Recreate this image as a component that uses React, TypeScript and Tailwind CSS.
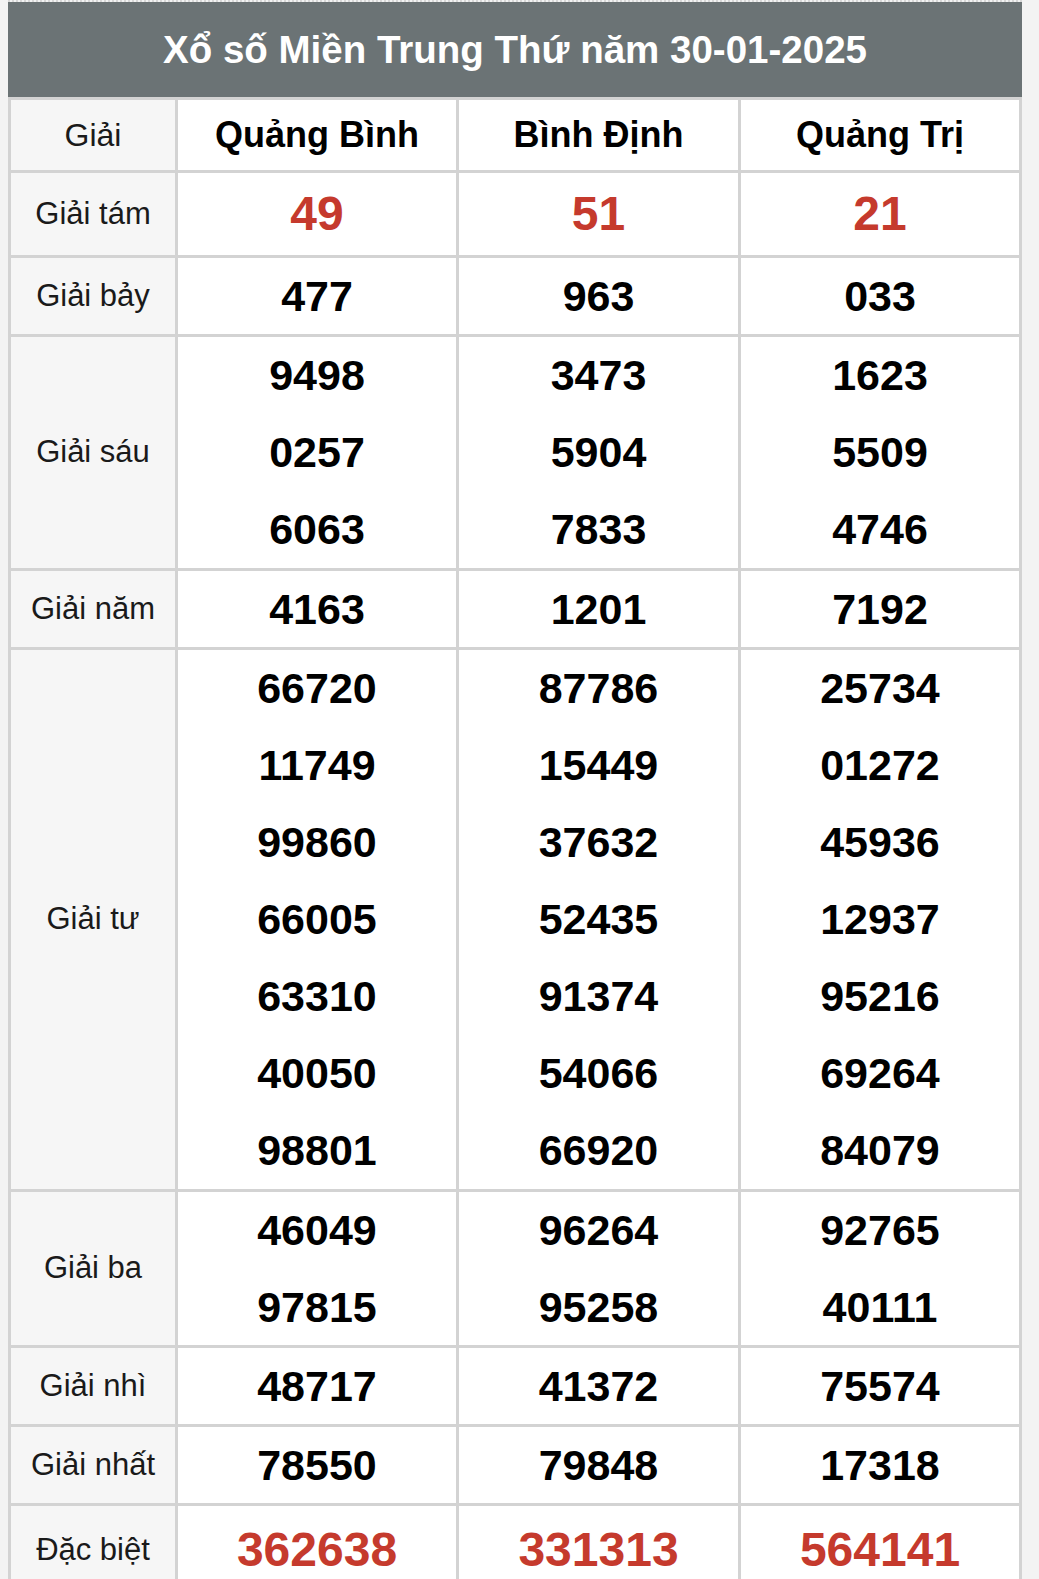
import React from "react";

type Row = {
  label: string;
  h: string;
  red?: boolean;
  cols: string[][];
};

const rows: Row[] = [
  { label: "Giải tám", h: "h-[82px]", red: true, cols: [["49"], ["51"], ["21"]] },
  { label: "Giải bảy", h: "h-[76px]", cols: [["477"], ["963"], ["033"]] },
  {
    label: "Giải sáu",
    h: "h-[231px]",
    cols: [
      ["9498", "0257", "6063"],
      ["3473", "5904", "7833"],
      ["1623", "5509", "4746"],
    ],
  },
  { label: "Giải năm", h: "h-[76px]", cols: [["4163"], ["1201"], ["7192"]] },
  {
    label: "Giải tư",
    h: "h-[539px]",
    cols: [
      ["66720", "11749", "99860", "66005", "63310", "40050", "98801"],
      ["87786", "15449", "37632", "52435", "91374", "54066", "66920"],
      ["25734", "01272", "45936", "12937", "95216", "69264", "84079"],
    ],
  },
  {
    label: "Giải ba",
    h: "h-[153px]",
    cols: [
      ["46049", "97815"],
      ["96264", "95258"],
      ["92765", "40111"],
    ],
  },
  { label: "Giải nhì", h: "h-[76px]", cols: [["48717"], ["41372"], ["75574"]] },
  { label: "Giải nhất", h: "h-[76px]", cols: [["78550"], ["79848"], ["17318"]] },
  { label: "Đặc biệt", h: "h-[88px]", red: true, cols: [["362638"], ["331313"], ["564141"]] },
];

const grid = "grid grid-cols-[167px_281px_282px_278px] border-t-[3px] border-[#d3d3d3]";
const cellBorder = "border-r-[3px] border-[#d3d3d3]";

export default function App() {
  return (
    <div
      className="min-h-[1579px] w-[1039px] bg-[#f3f3f3] pl-[8px]"
      style={{ fontFamily: '"Liberation Sans", Arial, sans-serif' }}
    >
      <div className="w-[1014px] overflow-hidden border-t-2 border-dotted border-[#d8d8d8]">
        <div className="flex h-[95px] items-center justify-center bg-[#6b7375]">
          <span className="text-[38.5px] font-bold text-white">Xổ số Miền Trung Thứ năm 30-01-2025</span>
        </div>
        <div className="border-x-[3px] border-[#d3d3d3] bg-white">
          <div className={grid}>
            <div className={`${cellBorder} flex h-[70px] items-center justify-center bg-[#f6f6f6] text-[32px] text-[#1a1a1a]`}>
              Giải
            </div>
            {["Quảng Bình", "Bình Định", "Quảng Trị"].map((n, i) => (
              <div
                key={n}
                className={`${i < 2 ? cellBorder : ""} flex h-[70px] items-center justify-center text-[36px] font-bold text-black`}
              >
                {n}
              </div>
            ))}
          </div>
          {rows.map((r) => (
            <div key={r.label} className={grid}>
              <div
                className={`${cellBorder} ${r.h} flex items-center justify-center bg-[#f6f6f6] text-[31px] text-[#1a1a1a]`}
              >
                {r.label}
              </div>
              {r.cols.map((c, i) => (
                <div key={i} className={`${i < 2 ? cellBorder : ""} ${r.h} flex flex-col`}>
                  {c.map((v, j) => (
                    <div
                      key={j}
                      className={
                        r.red
                          ? "flex flex-1 items-center justify-center text-[48px] font-bold text-[#c53a2d]"
                          : "flex flex-1 items-center justify-center text-[43px] font-bold text-black"
                      }
                    >
                      {v}
                    </div>
                  ))}
                </div>
              ))}
            </div>
          ))}
        </div>
      </div>
    </div>
  );
}
